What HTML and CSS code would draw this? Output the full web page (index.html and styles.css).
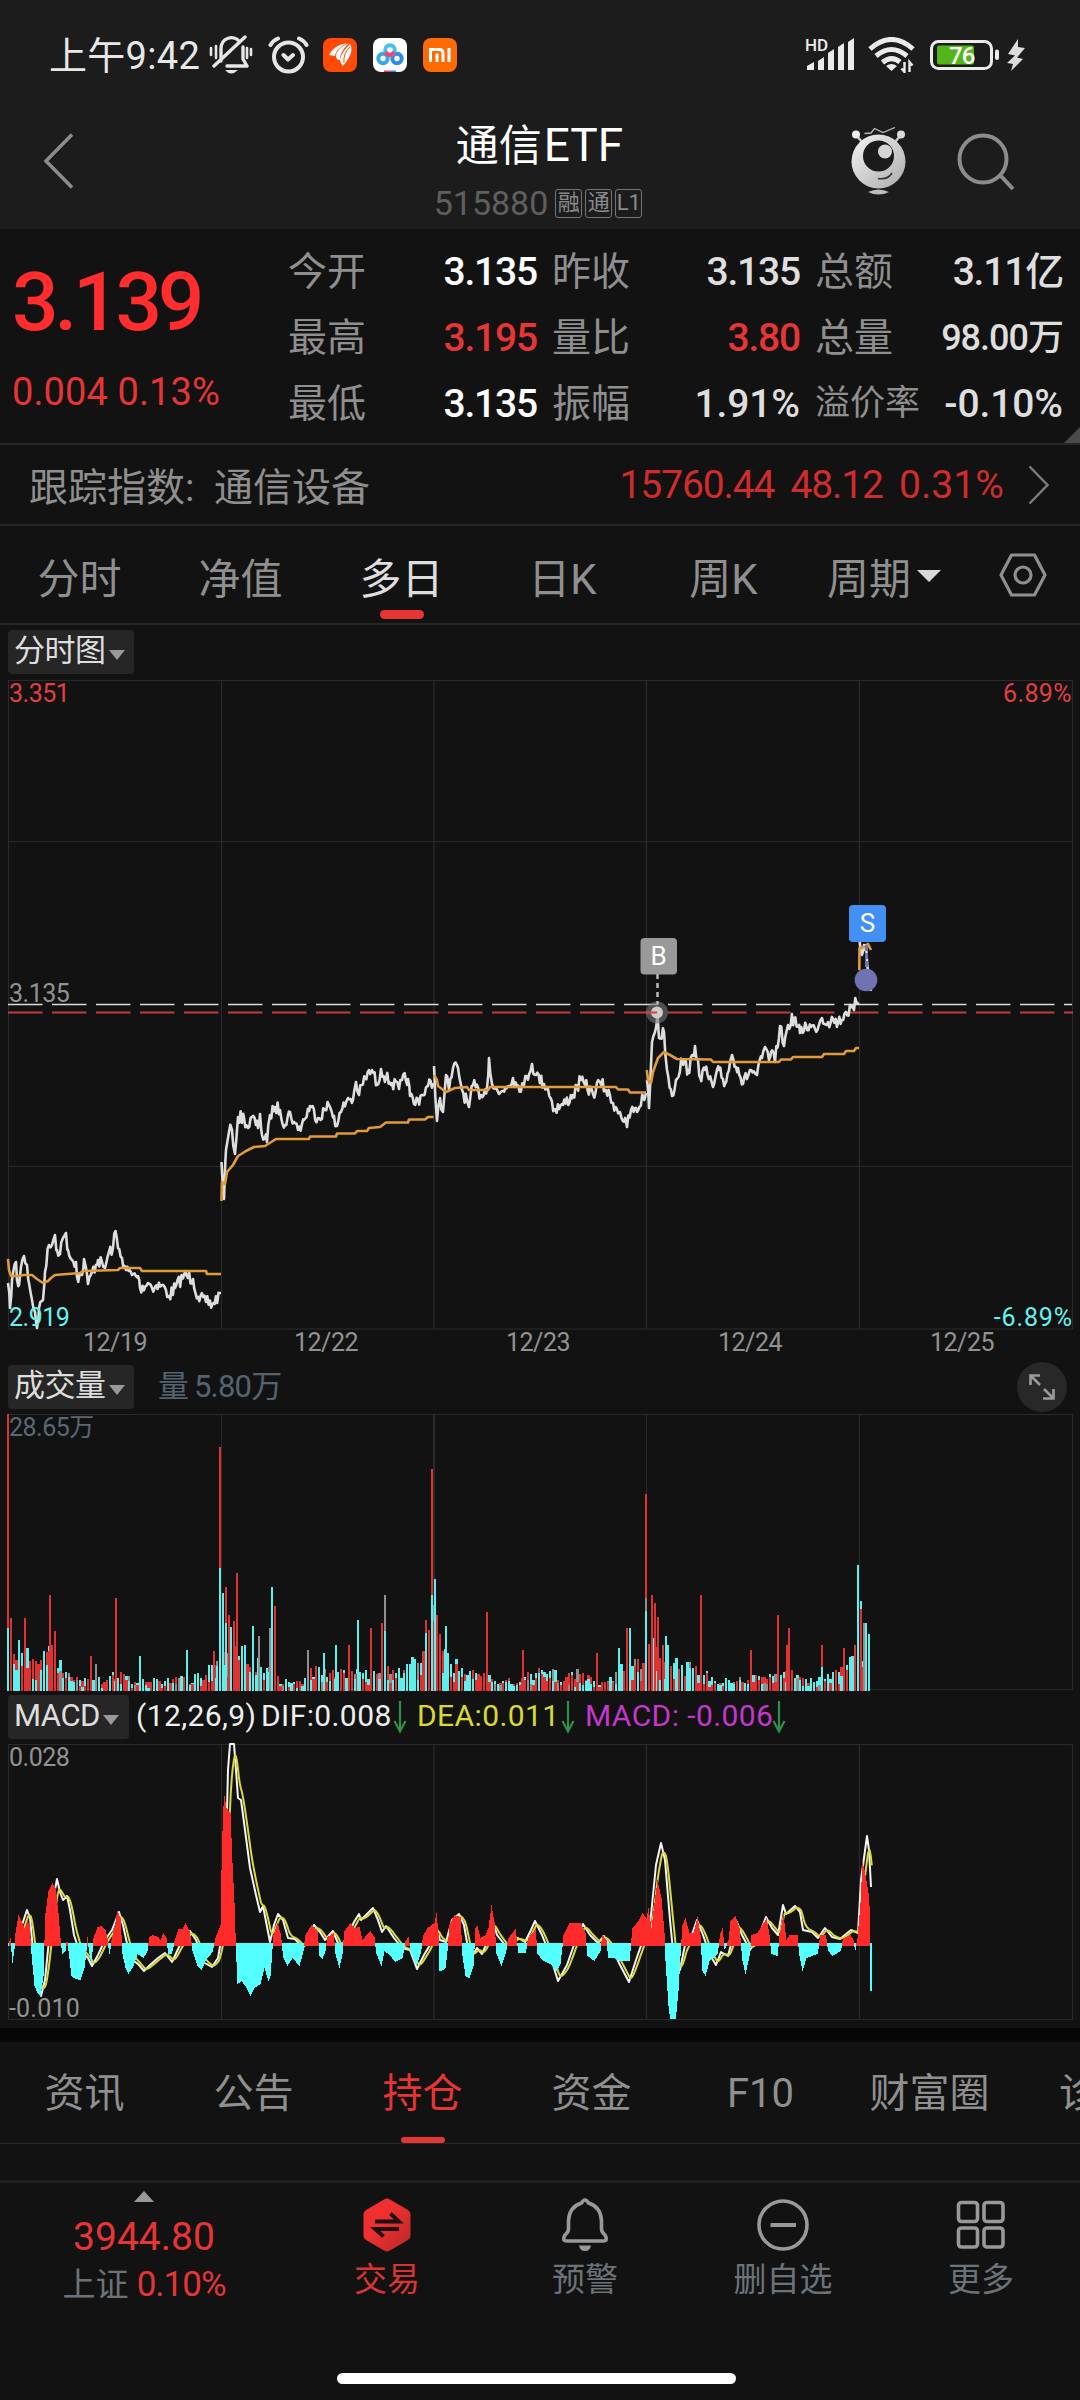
FILE: index.html
```html
<!DOCTYPE html>
<html lang="zh-CN">
<head>
  <meta charset="UTF-8" />
  <meta name="viewport" content="width=device-width, initial-scale=1.0"/>
  <title>通信ETF 515880</title>
  <link rel="stylesheet" href="styles.css">
</head>
<body>
  <header class="top">
    <div class="statusbar">
      <span class="clock">上午9:42</span>
      <svg class="ico-mute" width="44" height="40" viewBox="0 0 44 40" fill="none" stroke="#e6e6e6" stroke-width="3.4" stroke-linecap="round">
        <path d="M12 26V14C12 2 25 0 30 6M34 12V24L38 31H18M5 31L36 2" stroke-linejoin="round"/>
        <path d="M2 13v7M7 11v12M38 13v10M42 14v6" stroke-width="2.6"/>
        <path d="M16 35H29Q22 42 16 35Z" fill="#e6e6e6" stroke="none"/>
      </svg>
      <svg class="ico-alarm" width="42" height="38" viewBox="0 0 42 38" fill="none" stroke="#e6e6e6" stroke-width="4" stroke-linecap="round" stroke-linejoin="round">
        <circle cx="20.5" cy="21" r="14.5"/>
        <path d="M15.5 19L20 23.5L25 19M2.5 9Q5 4.5 10 2.5M38.5 9Q36 4.5 31 2.5"/>
      </svg>
      <svg class="app" width="34" height="34" viewBox="0 0 34 34">
        <rect width="34" height="34" rx="8" fill="#ff4a08"/>
        <path d="M6 17Q11 7 24 5Q12 12 12 18ZM13 18Q13 11 26 5Q16 15 17 22Q13 22 13 18ZM19 27Q13 20 27 6Q32 14 20 28Z" fill="#fff"/>
        <path d="M21 25Q20 15 27 9" stroke="#ff4a08" fill="none"/>
      </svg>
      <svg class="app" width="34" height="34" viewBox="0 0 34 34">
        <rect width="34" height="34" rx="8" fill="#fff"/>
        <g fill="none" stroke-width="4">
          <circle cx="10" cy="20.5" r="4.7" stroke="#35a7ea"/>
          <circle cx="24" cy="20.5" r="4.7" stroke="#2f8be6"/>
          <circle cx="17" cy="12" r="4.8" stroke="#42c3ef"/>
          <path d="M12.5 14Q16 20 21.5 14" stroke="#ee4a68"/>
        </g>
        <path d="M11 32.5h6v1.5h-6z" fill="#e8405c"/><path d="M17 32.5h6v1.5h-6z" fill="#3486d8"/>
      </svg>
      <svg class="app" width="34" height="34" viewBox="0 0 34 34">
        <rect width="34" height="34" rx="8" fill="#ff6b02"/>
        <path d="M7.5 24V11.5H16Q20 11.5 20 15V24M14 15.5V24M26 10V24" fill="none" stroke="#fff" stroke-width="3"/>
      </svg>

      <svg class="ico-signal" width="52" height="34" viewBox="0 0 52 34">
        <text x="0" y="13" class="hd">HD</text>
        <path d="M2 32v-4l7-4v8zM13 32v-9l6-4v13zM23 32V15l6-4v21zM33 32V9l6-4v27zM43 32V4l6-4v32z" fill="#ebebeb"/>
      </svg>
      <svg class="ico-wifi" width="48" height="36" viewBox="0 0 48 36" fill="none" stroke="#ebebeb" stroke-width="5">
        <path d="M2 12Q23.5 -7 45 12M8 19Q23.5 6 39 19M14.5 25.5Q23.5 18 32 25"/>
        <path d="M23.5 34L18 29Q23.5 25 29 29Z" fill="#ebebeb" stroke="none"/>
        <path d="M36.5 25V35L33.5 31.5M41.5 35V25L44.5 28.5" stroke-width="2.4"/>
      </svg>
      <svg class="ico-battery" width="70" height="30" viewBox="0 0 70 30">
        <rect x="1.5" y="1.5" width="60" height="27" rx="7" fill="none" stroke="#ebebeb" stroke-width="3"/>
        <rect x="7" y="5.5" width="37" height="19" rx="2" fill="#54b51a"/>
        <rect x="65" y="9.5" width="4" height="10.5" rx="2" fill="#ebebeb"/>
        <text x="19" y="24" class="pct">76</text>
      </svg>
      <svg class="ico-bolt" width="20" height="32" viewBox="0 0 20 32"><path d="M12 0L2 15L9 16.5L1 24L7 25L5 32L17 20L11 18.5L19 9L12 8Z" fill="#dcdcdc"/></svg>
    </div>

    <div class="titlebar">
      <svg class="back" width="32" height="56" viewBox="0 0 32 56"><path d="M29 1.5L3 28L29 54.5" fill="none" stroke="#8c8c8c" stroke-width="3.5"/></svg>
      <div class="title">
        <h1>通信<span>ETF</span></h1>
        <div class="code">515880<i>融</i><i>通</i><i>L1</i></div>
      </div>
      <div class="title-actions">
        <svg width="56" height="70" viewBox="0 0 56 70">
          <defs>
            <linearGradient id="face" x1="0" y1="0" x2="1" y2="1"><stop offset="0" stop-color="#f4f4f4"/><stop offset="1" stop-color="#ababab"/></linearGradient>
          </defs>
          <path d="M13.5 6.5L20 6L23.5 1.5L32 5.5L44 .5" fill="none" stroke="#bbb" stroke-width="1.3"/>
          <path d="M5 8L11 15M50 8L44 15" stroke="#ccc" stroke-width="2.5"/>
          <circle cx="5" cy="7.5" r="4" fill="#f0f0f0"/><circle cx="50" cy="7.5" r="4" fill="#d8d8d8"/>
          <circle cx="27.5" cy="34.5" r="27" fill="url(#face)"/>
          <circle cx="27.5" cy="29" r="15.5" fill="#1b1b1b"/>
          <circle cx="34" cy="24.5" r="7" fill="#d6d6d6"/>
          <path d="M27 51.5Q37 53 41 46" fill="none" stroke="#333" stroke-width="1.6"/>
          <path d="M17 65Q27.5 60 38 65Q27.5 70 17 65Z" fill="#bdbdbd"/>
        </svg>
        <svg class="search" width="60" height="60" viewBox="0 0 60 60" fill="none" stroke="#8c8c8c" stroke-width="4">
          <circle cx="27" cy="27" r="23.5"/><path d="M44 43L57 57"/>
        </svg>
      </div>
    </div>
  </header>

  <section class="quote">
    <div class="now">
      <div class="price">3.139</div>
      <div class="change">0.004 0.13%</div>
    </div>
    <dl class="stats c1">
      <div><dt>今开</dt><dd class="bright">3.135</dd></div>
      <div><dt>最高</dt><dd class="up">3.195</dd></div>
      <div><dt>最低</dt><dd class="bright">3.135</dd></div>
    </dl>
    <dl class="stats c2">
      <div><dt>昨收</dt><dd>3.135</dd></div>
      <div><dt>量比</dt><dd class="up">3.80</dd></div>
      <div><dt>振幅</dt><dd class="rate">1.91%</dd></div>
    </dl>
    <dl class="stats c3">
      <div><dt>总额</dt><dd>3.11亿</dd></div>
      <div><dt>总量</dt><dd class="small">98.00万</dd></div>
      <div><dt class="small">溢价率</dt><dd class="rate">-0.10%</dd></div>
    </dl>
    <span class="corner"></span>
  </section>

  <section class="index-row">
    <span class="idx-name">跟踪指数:</span>
    <span class="idx-target">通信设备</span>
    <span class="idx-val">15760.44</span><span class="idx-val">48.12</span><span class="idx-val rate">0.31%</span>
    <svg width="22" height="40" viewBox="0 0 22 40"><path d="M1.5 1.5L19.5 20L1.5 38.5" fill="none" stroke="#7c7c7c" stroke-width="2.5"/></svg>
  </section>

  <nav class="periods">
    <a>分时</a>
    <a>净值</a>
    <a class="on">多日</a>
    <a>日K</a>
    <a>周K</a>
    <a class="more">周期<b></b></a>
    <svg width="48" height="44" viewBox="0 0 48 44" fill="none" stroke="#8f8f8f" stroke-width="3.2" stroke-linejoin="round">
      <path d="M12.5 2H35.5L46 22L35.5 42H12.5L2 22Z"/><circle cx="24" cy="22" r="8"/>
    </svg>
  </nav>

  <main>
    <div class="toolbar tb-price"><button>分时图<b></b></button></div>
    <svg class="chart" width="1080" height="685" viewBox="0 679 1080 685">
      <path class="grid" d="M8 680.5H1072.5M8 841.5H1072.5M8 1166.5H1072.5M8 1329H1072.5M8.5 680V1329M221.5 680V1329M434 680V1329M646.5 680V1329M859.5 680V1329M1072.5 680V1329"/>
      <path d="M8 1004.5H1072" stroke="#dcdcdc" stroke-width="1.3" stroke-dasharray="34.5 9.5"/>
      <path d="M8 1012.5H1073" stroke="#c23c3c" stroke-width="2" stroke-dasharray="34.5 9.5"/>
      <path id="priceLine" class="line" stroke="#dedede"/>
      <path id="avgLine" class="line" stroke="#e09c38"/>
      <text class="lbl red" x="9" y="702">3.351</text>
      <text class="lbl red end" x="1072" y="702">6.89%</text>
      <text class="lbl" x="9" y="1002">3.135</text>
      <text class="lbl cyan" x="9" y="1326">2.919</text>
      <text class="lbl cyan end neg" x="1073" y="1326">-6.89%</text>
      <text class="lbl mid" x="115" y="1351">12/19</text>
      <text class="lbl mid" x="326" y="1351">12/22</text>
      <text class="lbl mid" x="538" y="1351">12/23</text>
      <text class="lbl mid" x="750" y="1351">12/24</text>
      <text class="lbl mid" x="962" y="1351">12/25</text>
      <!-- buy / sell marks -->
      <circle cx="657" cy="1012.5" r="11" fill="#777" fill-opacity=".6"/>
      <circle cx="657" cy="1012.5" r="6" fill="#ccc"/>
      <path d="M646 1012.5H657" stroke="#d04444" stroke-width="2"/>
      <path d="M657.5 974V1004" stroke="#bbb" stroke-width="2.5" stroke-dasharray="5 4"/>
      <rect x="640.5" y="938" width="36.5" height="36.5" rx="4" fill="#999"/>
      <text class="mark" x="658.5" y="965">B</text>
      <path d="M866.5 945V970" stroke="#7271b4" stroke-width="3" stroke-dasharray="6 2"/>
      <circle cx="866" cy="980" r="11.3" fill="#7271b4"/>
      <rect x="849" y="905" width="37" height="37" rx="4" fill="#4390f5"/>
      <text class="mark" x="867.5" y="932">S</text>
    </svg>

    <div class="toolbar tb-vol">
      <button>成交量<b></b></button>
      <span class="vol-now">量<em>5.80万</em></span>
      <span class="expand"><svg width="26" height="26" viewBox="0 0 26 26" fill="none" stroke="#9a9a9a" stroke-width="2.6"><path d="M1.5 11V1.5H11M1.5 1.5L11 11M15 15L24.5 24.5M24.5 15V24.5H14"/></svg></span>
    </div>
    <svg class="chart" width="1080" height="282" viewBox="0 1410 1080 282" shape-rendering="crispEdges">
      <path class="grid" d="M8 1414.5H1072.5M8 1689.5H1072.5M8.5 1414V1690M221.5 1414V1690M434 1414V1690M646.5 1414V1690M859.5 1414V1690M1072.5 1414V1690"/>
      <g id="volBars"></g>
      <text class="lbl steel" x="9" y="1436">28.65万</text>
    </svg>

    <div class="toolbar tb-macd">
      <button class="latin">MACD<b></b></button>
      <span class="m-par">(12,26,9)</span>
      <span class="m-dif">DIF:0.008</span><svg class="dn" width="14" height="34" viewBox="0 0 14 34"><path d="M7 1V31M1.5 21L7 31.5L12.5 21"/></svg>
      <span class="m-dea">DEA:0.011</span><svg class="dn" width="14" height="34" viewBox="0 0 14 34"><path d="M7 1V31M1.5 21L7 31.5L12.5 21"/></svg>
      <span class="m-macd">MACD: -0.006</span><svg class="dn" width="14" height="34" viewBox="0 0 14 34"><path d="M7 1V31M1.5 21L7 31.5L12.5 21"/></svg>
    </div>
    <svg class="chart" width="1080" height="287" viewBox="0 1741 1080 287">
      <path class="grid" d="M8 1744.5H1072.5M8 2019.5H1072.5M8.5 1744V2020M221.5 1744V2020M434 1744V2020M646.5 1744V2020M859.5 1744V2020M1072.5 1744V2020"/>
      <path id="difLine" class="line thin" stroke="#f5f5f5"/>
      <path id="deaLine" class="line thin" stroke="#dada3c"/>
      <g id="macdBars" shape-rendering="crispEdges"></g>
      <text class="lbl" x="9" y="1766">0.028</text>
      <text class="lbl neg" x="9" y="2017">-0.010</text>
    </svg>
  </main>

  <nav class="sections">
    <a>资讯</a>
    <a>公告</a>
    <a class="on">持仓</a>
    <a>资金</a>
    <a>F10</a>
    <a>财富圈</a>
    <a class="cut">诊</a>
  </nav>

  <footer class="bottombar">
    <div class="sse">
      <span class="tri"></span>
      <div class="sse-val">3944.80</div>
      <div class="sse-chg">上证 <span>0.10%</span></div>
    </div>
    <div class="act trade">
      <svg width="54" height="54" viewBox="0 0 54 54">
        <defs><linearGradient id="hex" x1="0" y1="0" x2="1" y2="1"><stop offset="0.4" stop-color="#f03030"/><stop offset="1" stop-color="#b82828"/></linearGradient></defs>
        <path d="M24 1.5Q27 -.5 30 1.5L48 12Q50.5 13.5 50.5 16V38Q50.5 40.5 48 42L30 52.5Q27 54.5 24 52.5L6 42Q3.5 40.5 3.5 38V16Q3.5 13.5 6 12Z" fill="url(#hex)"/>
        <path d="M15 23.5H39L30.5 15.5M39 31H15L23.5 38.5" fill="none" stroke="#1c1010" stroke-width="3.8"/>
      </svg>
      <span>交易</span>
    </div>
    <div class="act">
      <svg width="54" height="54" viewBox="0 0 54 54" fill="none" stroke="#999" stroke-width="3.6" stroke-linejoin="round">
        <path d="M23.5 5Q27 -1 30.5 5Q43 9 43.5 23V31Q43.5 34 47 37Q50.5 43 45 43H9Q3.5 43 7 37Q10.5 34 10.5 31V23Q11 9 23.5 5Z"/>
        <path d="M21 47.5H33Q32 53 27 53Q22 53 21 47.5Z" fill="#999" stroke="none"/>
      </svg>
      <span>预警</span>
    </div>
    <div class="act">
      <svg width="54" height="54" viewBox="0 0 54 54" fill="none" stroke="#999" stroke-width="3.6"><circle cx="27" cy="27" r="24"/><path d="M14.5 27H40" stroke-width="4"/></svg>
      <span>删自选</span>
    </div>
    <div class="act">
      <svg width="54" height="54" viewBox="0 0 54 54" fill="none" stroke="#999" stroke-width="3.6">
        <rect x="4.5" y="4.5" width="19" height="19" rx="3"/><rect x="30" y="4.5" width="19" height="19" rx="3"/>
        <rect x="4.5" y="30" width="19" height="19" rx="3"/><rect x="30" y="30" width="19" height="19" rx="3"/>
      </svg>
      <span>更多</span>
    </div>
    <div class="home"></div>
  </footer>

  <script>
    // one string per trading day, "x,y x,y ..."
    const priceDays = [
      "8,1283 10,1308 12,1280 16,1262 17,1280 19,1285 21,1267 24,1256 27,1265 29,1283 32,1300 35,1312 37,1328 39,1308 43,1300 45,1272 49,1245 52,1245 55,1235 57,1250 60,1254 63,1238 66,1233 68,1250 72,1260 76,1262 77,1277 82,1275 84,1259 88,1284 92,1272 98,1260 105,1268 109,1252 113,1248 115.5,1231 118,1248 122,1258 126,1270 132,1275 138,1276 140,1288 148,1283 155,1287 162,1285 169,1296 175,1288 184,1275 193,1279 198,1297 206,1302 212,1305 221,1293",
      "221.5,1162 224,1199 226,1150 229,1132 232,1130 235,1154 238,1117 244,1118 248,1128 252,1117 258,1128 260,1114 262,1135 267,1142 270,1115 275,1107 280,1110 285,1125 290,1112 294,1122 298,1130 304,1120 310,1106 318,1118 325,1110 329,1105 334,1116 337,1126 341,1112 348,1098 353,1100 356,1082 359,1095 365,1078 372,1070 377,1085 381,1069 386,1078 392,1083 399,1089 402,1080 408,1079 410,1096 414,1104 422,1095 428,1086 433,1083",
      "434,1066 437,1121 440,1098 443,1112 446,1075 449,1090 453,1068 458,1068 462,1090 469,1107 473,1085 481,1095 487,1088 489,1058 492,1084 499,1094 505,1088 513,1078 517,1086 524,1085 532,1064 536,1075 544,1084 548,1089 554,1109 563,1105 573,1095 581,1080 585,1085 593,1094 600,1082 606,1090 613,1103 620,1112 627,1127 631,1110 637,1112 643,1096 646,1093",
      "647,1080 649,1108 652,1042 655,1032 657.5,1014 659,1038 664,1032 667,1070 672,1096 676,1080 682,1060 688,1070 694,1056 695,1046 698,1060 700,1077 705,1070 713,1087 719,1070 725,1084 732,1055 738,1068 743,1084 750,1070 757,1075 762,1058 765,1047 769,1060 771,1052 775,1062 780,1026 784,1046 788,1025 794,1018 800,1033 806,1025 815,1029 822,1018 828,1022 833,1019 838,1023 846,1012 854,1010 856,1001 859,1004",
      "859.5,940 862,955 864,945 866,945 868,970 871,991"
    ];
    const avgDays = [
      "8,1259 9,1270 11,1276 18,1276 24,1275 32,1275 37,1279 43,1283 48,1281 51,1278 55,1275 80,1273 84,1271 118,1270 120,1268 140,1268 142,1271 206,1271 207,1274 221,1274",
      "221.5,1201 222,1182 225,1184 227,1172 233,1165 238,1156 246,1151 254,1147 265,1146 276,1139 309,1139 310,1136.5 336,1136.5 337,1133.5 355,1133.5 357,1131 367,1131 369,1128 380,1127 386,1122.5 408,1122.5 409,1119.5 425,1119.5 428,1117 433.5,1117",
      "434,1075 437,1080 438,1086 446,1092 455,1088 467,1087 469,1090 488,1090 490,1087 616,1087 618,1089.5 628,1089.5 630,1092.5 646,1092.5",
      "646.8,1070 648,1080 651,1083 653,1072 658,1058 664,1052 670,1055 677,1059 711,1059.5 713,1062 779,1062 781,1059.5 791,1059.5 793,1057 822,1057 824,1054 844,1054 846,1051 854,1051 856,1048 859,1048",
      "859.3,970 859.5,948 865,947 868,944 871,950"
    ];
    const volEnv = "8,50 20,50 30,44 40,44 50,48 58,38 65,24 75,14 85,14 100,14 120,22 135,10 160,14 190,15 205,22 215,40 222,90 230,76 240,64 250,44 262,36 270,48 280,14 300,9 310,28 330,22 350,24 365,22 385,26 395,22 410,32 425,50 434,90 440,60 450,38 465,32 480,22 500,12 520,16 545,26 560,19 580,22 600,10 615,20 625,32 640,32 647,84 655,78 665,52 680,34 700,24 720,12 740,17 770,18 785,24 795,22 815,12 835,20 850,34 858,54 868,60";
    // x, height, colour
    const volSpikes = "8,277,r 8,63,c 10.5,73,r 19,51,c 24.5,73,r 49.5,96,r 55,60,r 90.5,35,r 96,27,g 115.5,93,r 140,35,c 187,41,c 214,40,r 220,244,r 220,123,c 223,98,c 225.5,104,r 225.5,68,c 228.5,76,r 236.5,118,r 253,65,c 258.5,55,g 269.5,63,g 272,104,c 275,85,r 275,60,r 308,41,g 324,38,c 335.5,46,c 349,46,r 357.5,71,c 371,63,r 382,68,r 385,96,g 385,60,c 426,71,r 426,58,c 431.5,222,r 431.5,96,c 434.5,112,c 437,76,r 445.5,65,c 486.5,79,r 522.5,41,r 597,38,r 618.5,43,c 627,63,r 630,63,c 646,197,r 646,93,g 646,80,c 651.5,96,r 654.5,88,r 657.5,74,r 665.5,55,c 668,46,c 701,96,r 751,41,r 778,76,r 789,63,r 787,46,r 822,46,r 822,24,c 844,43,r 855,46,r 858,126,c 861,90,c 861,82,r 863.5,68,g 866,68,c 869,57,c";
    const hist = "8,0 10,5 12,-17 14,-3 15,10 18,28 21,22 24,15 27,22 29,18 31,-8 34,-40 37,-47 40,-50 43,-30 44,3 45,30 48,52 52,60 55,55 58,30 60,5 62,-8 65,-5 66.5,4 68,-5 71,-30 75,-33 80,-34 84,-22 86,-5 87,6 89,-8 91,-17 93,5 97,16 101,17 105,13 107,5 109,-8 111,3 114,16 117,32 120,25 122,-8 125,-22 128,-28 133,-20 137,-8 143,-12 147,-5 149,6 152,8 158,6 160,3 163,10 166,5 168,-8 171,-8 174,2 178,14 182,14 185,20 189,12 192,-5 197,-20 201,-24 205,-15 212,-6 215,5 220,18 221.5,100 223.5,150 226,135 230,130 232,80 234,40 235.5,-5 237,-38 241,-35 245,-40 250,-50 254,-42 260,-38 264,-22 268,-35 270,-30 272,-3 273,8 277,20 280,10 283,-12 287,-20 292,-12 299,-20 303,-5 305,8 311,18 317,12 319,-10 322,-13 325,-5 327,6 333,10 335,-8 339,-22 342,-8 344,12 350,20 354,15 359,16 362,3 366,8 370,12 374,6 376,-8 381,-20 384,-5 388,-8 395,-16 402,-12 405,2 408,6 410,-5 416,-20 420,-8 423,8 427,15 434,20 436,30 438,10 439,-25 441,-25 445,-22 447,-5 449,18 454,28 460,26 462,-10 465,-30 469,-32 473,-20 475,15 477,17 480,5 485,8 488,15 491,38 494,20 496,-8 501,-20 505,-8 508,5 515,14 518,-7 525,-7 528,5 535,14 537,-8 543,-15 550,-18 556,-25 560,-18 563,8 569,20 580,20 585,10 587,-10 594,-15 600,-5 602,8 606,3 608,-12 613,-12 620,-15 629,-15 632,15 638,22 642,30 646,25 648,35 651,15 654,40 657,63 661,45 664,10 665,-15 668,-60 670,-75 675,-76 678,-45 680,-10 682,18 685,25 689,10 693,10 697,26 700,8 702,-25 705,-30 709,-15 717,-8 720,10 722,15 724,-3 728,3 730,22 735,27 739,15 742,-15 745,-28 749,-10 751,8 757,10 762,18 766,25 769,8 771,-8 777,-10 779,8 783,28 786,3 789,8 797,8 799,-10 802,-25 806,-12 817,-8 820,8 825,8 828,-5 832,-10 840,-5 843,5 850,8 853,3 855,-4 857,5 860,40 862,82 865,68 868,50 869.5,30 870,-45 872,-45";
    const dif = "8,1944 16,1944 22,1925 27,1910 30,1918 33,1950 37,1985 41,1996 45,1980 49,1940 53,1900 57,1879 60,1892 63,1900 67,1896 70,1910 74,1935 79,1950 85,1955 88,1958 92,1966 98,1955 105,1940 112,1930 119,1912 123,1925 128,1948 133,1960 139,1965 144,1971 150,1965 158,1958 165,1953 172,1962 180,1945 190,1931 196,1940 203,1962 212,1967 218,1958 222,1935 226,1850 228,1770 230,1744 234,1744 236,1770 238,1798 241,1800 245,1830 250,1868 256,1895 260,1912 263,1906 270,1942 274,1925 278,1914 283,1920 288,1938 295,1939 303,1948 309,1935 314,1925 320,1932 325,1940 333,1931 340,1948 348,1935 354,1922 359,1914 361,1920 367,1914 373,1908 378,1920 382,1932 386,1926 394,1938 402,1948 410,1950 417,1969 424,1955 430,1945 436,1925 440,1940 446,1942 452,1920 459,1914 464,1925 470,1960 477,1948 482,1954 488,1940 492,1918 497,1935 505,1945 518,1938 525,1942 531,1930 535,1921 542,1935 550,1955 558,1981 567,1965 575,1942 583,1924 590,1935 598,1943 604,1936 613,1950 620,1965 629,1982 636,1960 643,1940 650,1925 656,1865 661,1843 665,1860 670,1920 675,1970 680,1970 685,1945 690,1940 697,1920 703,1935 710,1955 716,1965 721,1952 728,1956 737,1922 742,1935 750,1950 758,1938 766,1917 772,1928 778,1935 783,1905 786,1914 795,1906 800,1912 803,1930 812,1932 818,1938 825,1928 832,1937 840,1939 851,1930 858,1933 861,1880 867,1836 869,1850 871,1887";

    const parse = s => s.split(" ").map(p => p.split(",").map(Number));
    let seed = 7;
    function rnd() {
      seed = (seed * 16807) % 2147483647;
      return seed / 2147483647;
    }
    function at(pts, x) {
      let i = 1;
      while (i < pts.length - 1 && pts[i][0] < x) i++;
      const [x0, y0] = pts[i - 1], [x1, y1] = pts[i];
      return y0 + (y1 - y0) * Math.min(1, Math.max(0, (x - x0) / (x1 - x0)));
    }
    const toPath = pts => "M" + pts.map(p => p[0].toFixed(1) + " " + p[1].toFixed(1)).join("L");

    // price ticks: small noise between the known points
    document.getElementById("priceLine").setAttribute("d", priceDays.map(d => {
      const pts = parse(d), out = [];
      pts.forEach((p, i) => {
        out.push(p);
        const n = pts[i + 1];
        if (!n) return;
        for (let x = p[0] + 1.3; x < n[0] - 0.6; x += 1.3) {
          out.push([x, at(pts, x) + (rnd() - 0.5) * 13]);
        }
      });
      return toPath(out);
    }).join(""));
    document.getElementById("avgLine").setAttribute("d", avgDays.map(d => toPath(parse(d))).join(""));

    const ns = "http://www.w3.org/2000/svg";
    function bar(parent, x, y, w, h, fill) {
      const r = document.createElementNS(ns, "rect");
      r.setAttribute("x", x);
      r.setAttribute("y", y);
      r.setAttribute("width", w);
      r.setAttribute("height", h);
      r.setAttribute("fill", fill);
      parent.appendChild(r);
    }

    const volBars = document.getElementById("volBars");
    const colors = { r: "#e03232", c: "#5eeeec", g: "#8f8f8f" };
    const env = parse(volEnv);
    const pick = () => { const v = rnd(); return v < 0.46 ? "r" : v < 0.92 ? "c" : "g"; };
    for (let x = 8; x < 869; x += 2.75) {
      const h = at(env, x) * (0.45 + rnd() * 0.55);
      bar(volBars, x - 1, 1690.5 - h, 2.4, h, colors[pick()]);
      const h2 = h * (0.3 + rnd() * 0.6);
      bar(volBars, x - 1, 1690.5 - h2, 2.4, h2, colors[pick()]);
    }
    volSpikes.split(" ").map(s => s.split(",")).sort((a, b) => b[1] - a[1]).forEach(([x, h, c]) => {
      bar(volBars, x - 1, 1690.5 - h, 2.2, +h, colors[c]);
    });

    const difPts = parse(dif), dea = [];
    let ema = 1944;
    for (let x = 8; x <= 871; x++) {
      ema += (at(difPts, x) - ema) * 0.3;
      dea.push([x + 0.8, ema]);
    }
    document.getElementById("difLine").setAttribute("d", toPath(difPts));
    document.getElementById("deaLine").setAttribute("d", toPath(dea));

    const macdBars = document.getElementById("macdBars");
    const hp = parse(hist);
    for (let x = 8; x < 872; x++) {
      const v = at(hp, x);
      if (v > 0) bar(macdBars, x, 1943 - v, 1, v + 3, "#ff2a2a");
      else bar(macdBars, x, 1943, 1, Math.min(76, -v + 3), "#54ffff");
    }
  </script>
</body>
</html>
```

FILE: styles.css
```css
:root {
  --bg: #121212;
  --head: #1c1c1c;
  --line: #262626;
  --gray: #8f8f8f;
  --text: #dedede;
  --red: #e53535;
}

* {
  box-sizing: border-box;
}

body {
  margin: 0;
  width: 1080px;
  height: 2400px;
  overflow: hidden;
  background: var(--bg);
  color: var(--gray);
  font-family: Roboto, "Noto Sans CJK SC", sans-serif;
  display: flex;
  flex-direction: column;
}

h1, dl, dd {
  margin: 0;
}

svg {
  display: block;
  flex: none;
}

/* status bar + title */
.top {
  height: 229px;
  background: var(--head);
}

.statusbar {
  height: 108px;
  padding: 2px 54px 0 49px;
  display: flex;
  align-items: center;
}

.clock {
  width: 160px;
  margin-bottom: 5px;
  font-size: 38px;
  letter-spacing: 0.3px;
  color: #e8e8e8;
  white-space: nowrap;
}

.ico-alarm {
  margin: 0 13px 0 15px;
}

.app {
  margin-right: 16px;
}

.ico-signal {
  margin-left: auto;
  overflow: visible;
}

.hd {
  font-size: 17px;
  font-weight: 500;
  fill: #ebebeb;
}

.pct {
  font-size: 24px;
  font-weight: 500;
  letter-spacing: -1px;
  fill: #fff;
}

.ico-wifi {
  margin: 0 14px 0 11px;
}

.ico-bolt {
  margin-left: 6px;
}

.titlebar {
  height: 121px;
  padding: 0 64px 0 43px;
  display: flex;
  justify-content: space-between;
}

.back {
  margin-top: 25px;
}

.title {
  margin-left: 150px;
  text-align: center;
  color: #5f5f5f;
}

h1 {
  height: 66px;
  line-height: 66px;
  margin: 4px -3px 0 0;
  font-size: 43px;
  font-weight: 400;
  color: #fff;
}

h1 span {
  font-size: 46px;
  margin-left: 2px;
}

.code {
  height: 50px;
  display: flex;
  align-items: center;
  font-size: 34px;
}

.code i {
  width: 27px;
  height: 29px;
  margin-left: 3px;
  border: 1.5px solid #747474;
  border-radius: 3px;
  font-size: 22px;
  line-height: 25px;
  font-style: normal;
  color: #8a8a8a;
  display: flex;
  justify-content: center;
}

.code i:first-of-type {
  margin-left: 7px;
}

.title-actions {
  display: flex;
  padding-top: 19px;
}

.search {
  margin: 5px 0 0 49px;
}

/* quote */
.quote {
  position: relative;
  height: 216px;
  border-bottom: 2px solid var(--line);
  display: flex;
}

.now {
  width: 288px;
  padding-left: 12px;
  white-space: nowrap;
}

.price {
  margin-top: 25px;
  height: 96px;
  line-height: 96px;
  font-size: 82px;
  font-weight: 500;
  letter-spacing: -4.2px;
  color: #ff2d2d;
}

.change {
  height: 84px;
  line-height: 85px;
  font-size: 38px;
  letter-spacing: 0.1px;
  color: var(--red);
}

.stats {
  padding-top: 10px;
}

.stats div {
  height: 66px;
  display: flex;
  align-items: center;
  justify-content: space-between;
  white-space: nowrap;
}

.c1 {
  width: 249px;
}

.c2 {
  width: 248px;
  margin-left: 15px;
}

.c3 {
  width: 248px;
  margin-left: 15px;
}

dt {
  font-size: 39px;
  line-height: 56px;
}

dd {
  font-size: 39px;
  line-height: 56px;
  font-weight: 500;
  letter-spacing: -1.2px;
  color: var(--text);
}

dt.small {
  font-size: 35px;
}

dd.small {
  font-size: 36px;
  letter-spacing: -1px;
}

dd.rate {
  letter-spacing: -0.1px;
}

dd.bright {
  color: #fff;
}

dd.up {
  color: var(--red);
}

.corner {
  position: absolute;
  right: 0;
  bottom: 0;
  border-style: solid;
  border-width: 0 0 16px 16px;
  border-color: transparent transparent #4a4a4a transparent;
}

/* tracked index */
.index-row {
  height: 81px;
  padding: 0 30px 0 29px;
  border-bottom: 2px solid var(--line);
  display: flex;
  align-items: center;
  font-size: 39px;
  white-space: nowrap;
}

.idx-name {
  width: 170px;
  margin-bottom: 2px;
}

.idx-target {
  margin: 0 auto 2px 15px;
}

.idx-val {
  margin-left: 16px;
  letter-spacing: -1.1px;
  color: #d02c2c;
}

.idx-val.rate {
  letter-spacing: 0.1px;
}

.index-row svg {
  margin-left: 24px;
}

/* period tabs */
.periods {
  height: 99px;
  border-bottom: 2px solid var(--line);
  display: flex;
  font-size: 42px;
}

.periods a {
  position: relative;
  left: -1px;
  width: 161px;
  line-height: 107px;
  text-align: center;
}

.periods .on {
  color: var(--text);
}

.periods .on::after,
.sections .on::after {
  content: "";
  position: absolute;
  left: 50%;
  margin-left: -22px;
  bottom: 4px;
  width: 44px;
  height: 9px;
  border-radius: 5px;
  background: var(--red);
}

.periods .more {
  width: 194px;
  padding-left: 23px;
  text-align: left;
}

.more b,
button b {
  display: inline-block;
  border: 8px solid transparent;
  border-top: 10px solid #999;
  border-bottom: 0;
}

.more b {
  margin: 0 0 12px 6px;
  border-width: 12px 12px 0;
  border-top-color: #d8d8d8;
}

.periods svg {
  margin-top: 27px;
}

/* chart toolbars */
.toolbar {
  display: flex;
  align-items: center;
  font-size: 31px;
  white-space: nowrap;
}

.toolbar button {
  height: 44px;
  width: 126px;
  margin: 0 0 0 8px;
  padding: 0 0 2px 6px;
  border: 0;
  border-radius: 4px;
  background: #262626;
  color: var(--text);
  font: 400 31px/42px Roboto, "Noto Sans CJK SC", sans-serif;
  letter-spacing: -0.5px;
  text-align: left;
}

.toolbar button.latin {
  width: 121px;
}

button b {
  margin: 0 0 1px 3px;
}

.tb-price {
  height: 54px;
}

.tb-vol {
  height: 46px;
}

.tb-macd {
  height: 49px;
  font-size: 30px;
}

.vol-now {
  margin: 0 0 7px 24px;
  color: #556370;
}

.vol-now em {
  margin-left: 5px;
  font-style: normal;
  letter-spacing: -0.8px;
}

.expand {
  width: 50px;
  height: 50px;
  margin: 0 13px 0 auto;
  border-radius: 50%;
  background: #282828;
  display: flex;
  align-items: center;
  justify-content: center;
}

.m-par {
  width: 125px;
  margin-left: 7px;
  color: #eee;
}

.m-dif {
  width: 132px;
  color: #eee;
}

.m-dea {
  width: 144px;
  margin-left: 10px;
  color: #dada2e;
}

.m-macd {
  width: 187px;
  margin-left: 10px;
  color: #c437cc;
}

.m-par, .m-dif, .m-dea, .m-macd {
  margin-bottom: 2px;
  letter-spacing: 0.4px;
}

.dn path {
  fill: none;
  stroke: #2f9149;
  stroke-width: 2.2;
}

.grid {
  fill: none;
  stroke: #2a2a2a;
  stroke-width: 1.2;
}

.line {
  fill: none;
  stroke-width: 2.6;
  stroke-linejoin: round;
}

.thin {
  stroke-width: 2;
}

.lbl {
  font-size: 25px;
  letter-spacing: -0.5px;
  fill: #929292;
}

.lbl.red { fill: #e04040; }
.lbl.cyan { fill: #66f0f0; }
.lbl.steel { fill: #5a6875; }
.lbl.end { text-anchor: end; letter-spacing: 0.4px; }
.lbl.mid { text-anchor: middle; }
.lbl.neg { letter-spacing: 0.2px; }
.lbl.end.neg { letter-spacing: 0.9px; }

.mark {
  font-size: 26px;
  fill: #fff;
  text-anchor: middle;
}

/* lower tabs */
.sections {
  height: 116px;
  border-top: 14px solid #060606;
  border-bottom: 1px solid #292929;
  display: flex;
  overflow: hidden;
  font-size: 40px;
}

.sections a {
  position: relative;
  flex: none;
  width: 169px;
  line-height: 103px;
  text-align: center;
}

.sections .on {
  color: var(--red);
}

.sections .on::after {
  bottom: 0;
  height: 6px;
  border-radius: 3px;
}

.sections .cut {
  text-align: left;
  padding-left: 45px;
}

/* bottom bar */
.bottombar {
  position: relative;
  margin-top: 36px;
  height: 220px;
  border-top: 3px solid #1e1e1e;
  display: flex;
  font-size: 33px;
}

.sse {
  width: 288px;
  padding-top: 8px;
  display: flex;
  flex-direction: column;
  align-items: center;
}

.tri {
  border: 10px solid transparent;
  border-top: 0;
  border-bottom: 11px solid #999;
}

.sse-val {
  height: 68px;
  line-height: 70px;
  font-size: 39px;
  color: var(--red);
}

.sse-chg {
  height: 30px;
  line-height: 30px;
  color: #6b7378;
}

.sse-chg span {
  font-size: 35px;
  letter-spacing: -1px;
  color: var(--red);
}

.act {
  width: 198px;
  padding-top: 15px;
  display: flex;
  flex-direction: column;
  align-items: center;
  color: #6b7378;
}

.act span {
  margin-top: 3px;
  line-height: 50px;
}

.act.trade {
  color: #d83434;
}

.home {
  position: absolute;
  left: 337px;
  bottom: 16px;
  width: 399px;
  height: 11px;
  border-radius: 6px;
  background: #fff;
}
```
